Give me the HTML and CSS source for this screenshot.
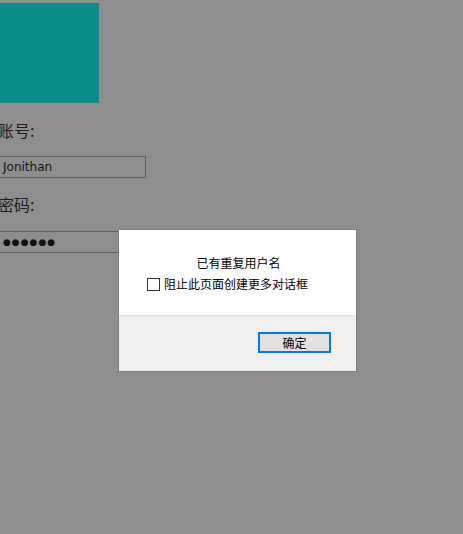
FILE: index.html
```html
<!DOCTYPE html>
<html>
<head>
<meta charset="utf-8">
<link rel="stylesheet" href="styles.css">
</head>
<body>
<div class="page">
  <div class="logo"></div>
  <div class="label first">账号:</div>
  <div class="field">Jonithan</div>
  <div class="label">密码:</div>
  <div class="field pw">●●●●●●</div>
</div>
<div class="dialog">
  <div class="dialog-body">
    <div class="msg">已有重复用户名</div>
    <label class="check"><span class="box"></span><span>阻止此页面创建更多对话框</span></label>
  </div>
  <div class="dialog-foot">
    <button class="ok">确定</button>
  </div>
</div>
</body>
</html>
```
FILE: styles.css
```css
html, body {
  margin: 0;
  padding: 0;
  background: #8e8e8e;
  height: 100%;
  font-family: "Noto Sans CJK SC", "Noto Sans", sans-serif;
}
.page {
  margin-left: -3px;
  padding-top: 3px;
  display: flex;
  flex-direction: column;
  align-items: flex-start;
}
.logo {
  width: 102px;
  height: 100px;
  background: #0b8c8a;
}
.label {
  margin-top: 15px;
  font-size: 16px;
  line-height: 22px;
  color: #1a1a1a;
  padding-left: 1px;
}
.label.first {
  margin-top: 16px;
}
.field {
  margin-top: 15px;
  width: 142px;
  height: 20px;
  border: 1px solid #606060;
  box-sizing: content-box;
  font-family: "DejaVu Sans", sans-serif;
  font-size: 12px;
  line-height: 20px;
  padding-left: 5px;
  color: #111;
}
.field.pw {
  margin-top: 16px;
  font-size: 9px;
  letter-spacing: 1px;
  color: #111;
}
.dialog {
  position: absolute;
  left: 118px;
  top: 229px;
  width: 237px;
  height: 141px;
  border: 1px solid #7c7c7c;
  background: #fff;
  display: flex;
  flex-direction: column;
  font-size: 12px;
  color: #000;
}
.dialog-body {
  height: 85px;
  display: flex;
  flex-direction: column;
  padding-top: 25px;
  box-sizing: border-box;
}
.msg {
  text-align: center;
  line-height: 16px;
  padding-left: 2px;
}
.check {
  display: flex;
  align-items: center;
  margin-top: 5px;
  margin-left: 28px;
  line-height: 16px;
}
.box {
  width: 11px;
  height: 11px;
  border: 1px solid #333;
  margin-right: 4px;
  background: #fff;
}
.dialog-foot {
  flex: 1;
  background: #f0f0f0;
  border-top: 1px solid #e0e0e0;
  display: flex;
  justify-content: flex-end;
  align-items: flex-start;
  padding-top: 16px;
  padding-right: 25px;
}
.ok {
  width: 73px;
  height: 21px;
  border: 2px solid #0078d7;
  background: #e1e1e1;
  font-family: "Noto Sans CJK SC", sans-serif;
  font-size: 12px;
  padding: 0;
  color: #000;
}
```
